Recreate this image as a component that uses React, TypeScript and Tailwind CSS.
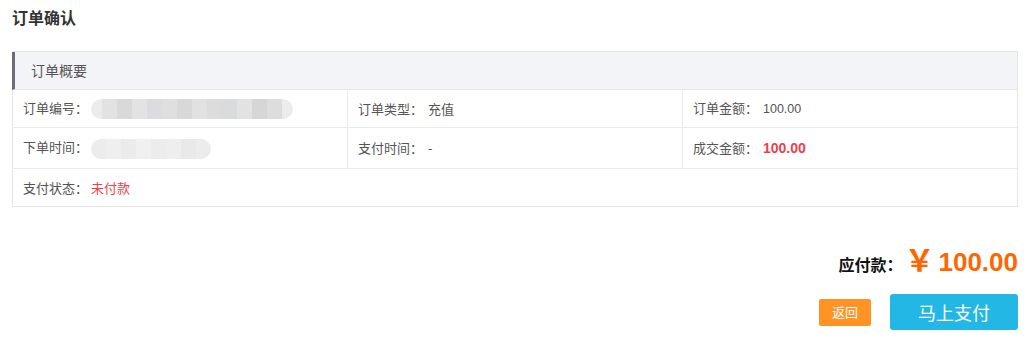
const font = { fontFamily: '"Noto Sans CJK SC", "Liberation Sans", sans-serif' };
const num = { fontFamily: '"Liberation Sans", sans-serif' };

function Blur({ shades, pad }: { shades: string[]; pad: string }) {
  return (
    <span className={`ml-[3px] inline-flex h-[20px] items-stretch overflow-hidden rounded-full bg-[#ececec] align-middle ${pad}`}>
      {shades.map((s, i) => (
        <span key={i} className="w-[15px]" style={{ background: s }} />
      ))}
    </span>
  );
}

function Cell({ children, last }: { children: React.ReactNode; last?: boolean }) {
  return (
    <div className={`flex items-center pl-[10px] text-[13px] text-[#555] ${last ? '' : 'border-r border-[#eaeaea]'}`}>
      <span>{children}</span>
    </div>
  );
}

export default function App() {
  return (
    <div className="h-[344px] w-[1031px] bg-white" style={font}>
      <div className="px-[12px] pt-[5px]">
        <h1 className="text-[16px] font-bold leading-[24px] text-[#333]">订单确认</h1>

        <div className="mt-[22px] w-[1006px] border border-[#e6e6e6]">
          <div className="-ml-px flex h-[38px] items-center border-b border-l-[3px] border-[#e6e6e6] border-l-[#6c6b7b] bg-[#f3f4f8] pl-[16px] text-[14px] text-[#555]">
            订单概要
          </div>
          <div className="grid h-[38px] grid-cols-[335px_335px_1fr] border-b border-[#eaeaea]">
            <Cell>
              订单编号：
              <Blur
                pad="px-[11px]"
                shades={['#e2e2e2', '#d9d9d9', '#e3e3e3', '#dcdcde', '#dfdfdf', '#d8d8d8', '#e1e1e1', '#dcdcdc', '#dadbdd', '#e2e2e2', '#d6d6d6', '#dddddd']}
              />
            </Cell>
            <Cell>
              订单类型：<span className="ml-[5px]">充值</span>
            </Cell>
            <Cell last>
              订单金额：<span className="ml-[5px] text-[12.5px]" style={num}>100.00</span>
            </Cell>
          </div>
          <div className="grid h-[41px] grid-cols-[335px_335px_1fr] border-b border-[#eaeaea]">
            <Cell>
              下单时间：
              <Blur pad="px-[15px]" shades={['#efefef', '#ebebeb', '#f0f0f0', '#ececec', '#eeeeee', '#e9e9e9']} />
            </Cell>
            <Cell>
              支付时间：<span className="ml-[5px]">-</span>
            </Cell>
            <Cell last>
              成交金额：
              <span className="ml-[5px] text-[14px] font-bold text-[#ee3f4d]" style={num}>
                100.00
              </span>
            </Cell>
          </div>
          <div className="flex h-[37px] items-center pl-[10px] text-[13px] text-[#555]">
            支付状态：<span className="ml-[3px] text-[#ee3f4d]">未付款</span>
          </div>
        </div>

        <div className="mt-[33px] flex w-[1006px] items-baseline justify-end">
          <span className="text-[16px] font-bold text-[#111]">应付款：</span>
          <span className="ml-[2px] text-[26px] font-bold leading-[36px] text-[#ff6600]" style={num}>
            <span className="mr-[4px] text-[30px]" style={font}>￥</span>100.00
          </span>
        </div>

        <div className="mt-[14px] flex w-[1006px] items-center justify-end gap-[19px]">
          <button className="h-[27px] w-[52px] rounded-[2px] bg-[#ff9326] text-[13px] text-white">返回</button>
          <button className="h-[36px] w-[128px] rounded-[3px] bg-[#23b7e5] text-[18px] text-white">马上支付</button>
        </div>
      </div>
    </div>
  );
}
